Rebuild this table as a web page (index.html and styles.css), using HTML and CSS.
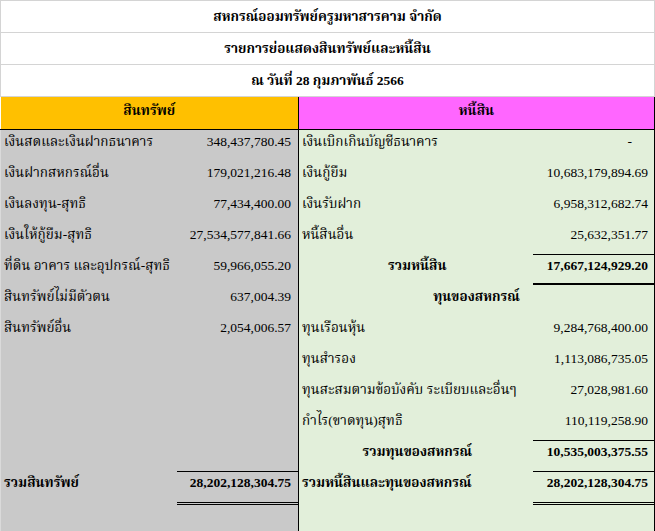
FILE: index.html
```html
<!DOCTYPE html>
<html lang="th">
<head>
<meta charset="utf-8">
<title>รายการย่อแสดงสินทรัพย์และหนี้สิน</title>
<link rel="stylesheet" href="styles.css">
</head>
<body>
<table class="sheet">
  <colgroup>
    <col class="c1"><col class="c2"><col class="c3"><col class="c4">
  </colgroup>
  <tbody>
    <tr class="title"><td colspan="4">สหกรณ์ออมทรัพย์ครูมหาสารคาม จำกัด</td></tr>
    <tr class="title"><td colspan="4">รายการย่อแสดงสินทรัพย์และหนี้สิน</td></tr>
    <tr class="title"><td colspan="4">ณ วันที่ 28 กุมภาพันธ์ 2566</td></tr>
    <tr class="head">
      <th colspan="2" class="h-asset">สินทรัพย์</th>
      <th colspan="2" class="h-liab">หนี้สิน</th>
    </tr>
    <tr class="row">
      <td class="al">เงินสดและเงินฝากธนาคาร</td><td class="an">348,437,780.45</td>
      <td class="bl">เงินเบิกเกินบัญชีธนาคาร</td><td class="bn dash">-</td>
    </tr>
    <tr class="row">
      <td class="al">เงินฝากสหกรณ์อื่น</td><td class="an">179,021,216.48</td>
      <td class="bl">เงินกู้ยืม</td><td class="bn">10,683,179,894.69</td>
    </tr>
    <tr class="row">
      <td class="al">เงินลงทุน-สุทธิ</td><td class="an">77,434,400.00</td>
      <td class="bl">เงินรับฝาก</td><td class="bn">6,958,312,682.74</td>
    </tr>
    <tr class="row">
      <td class="al">เงินให้กู้ยืม-สุทธิ</td><td class="an">27,534,577,841.66</td>
      <td class="bl">หนี้สินอื่น</td><td class="bn">25,632,351.77</td>
    </tr>
    <tr class="row">
      <td class="al">ที่ดิน อาคาร และอุปกรณ์-สุทธิ</td><td class="an">59,966,055.20</td>
      <td class="bl center bold">รวมหนี้สิน</td><td class="bn bold sub-thick">17,667,124,929.20</td>
    </tr>
    <tr class="row">
      <td class="al">สินทรัพย์ไม่มีตัวตน</td><td class="an">637,004.39</td>
      <td class="bl center bold" colspan="2">ทุนของสหกรณ์</td>
    </tr>
    <tr class="row">
      <td class="al">สินทรัพย์อื่น</td><td class="an">2,054,006.57</td>
      <td class="bl">ทุนเรือนหุ้น</td><td class="bn">9,284,768,400.00</td>
    </tr>
    <tr class="row">
      <td class="al"></td><td class="an"></td>
      <td class="bl">ทุนสำรอง</td><td class="bn">1,113,086,735.05</td>
    </tr>
    <tr class="row">
      <td class="al"></td><td class="an"></td>
      <td class="bl">ทุนสะสมตามข้อบังคับ ระเบียบและอื่นๆ</td><td class="bn">27,028,981.60</td>
    </tr>
    <tr class="row">
      <td class="al"></td><td class="an"></td>
      <td class="bl">กำไร(ขาดทุน)สุทธิ</td><td class="bn">110,119,258.90</td>
    </tr>
    <tr class="row">
      <td class="al"></td><td class="an"></td>
      <td class="bl center bold">รวมทุนของสหกรณ์</td><td class="bn bold sub">10,535,003,375.55</td>
    </tr>
    <tr class="row">
      <td class="al bold">รวมสินทรัพย์</td><td class="an bold sub">28,202,128,304.75</td>
      <td class="bl bold">รวมหนี้สินและทุนของสหกรณ์</td><td class="bn bold sub">28,202,128,304.75</td>
    </tr>
    <tr class="row last">
      <td class="al"></td><td class="an dbl-a"></td>
      <td class="bl"></td><td class="bn dbl-b"></td>
    </tr>
  </tbody>
</table>
</body>
</html>
```

FILE: styles.css
```css
html, body {
  margin: 0;
  padding: 0;
  background: #ffffff;
}

.sheet {
  border-collapse: collapse;
  table-layout: fixed;
  width: 654px;
  font-family: "Liberation Serif", "Noto Serif Thai", "Times New Roman", serif;
  font-size: 13.5px;
  line-height: 18px;
  color: #000;
}

.c1 { width: 176px; }
.c2 { width: 122px; }
.c3 { width: 234px; }
.c4 { width: 122px; }

td, th {
  padding: 0;
  white-space: nowrap;
  overflow: hidden;
}

.title td {
  height: 31px;
  text-align: center;
  vertical-align: middle;
  font-weight: bold;
  border: 1px solid #d4d4d4;
}

.head th {
  height: 28px;
  padding-bottom: 4px;
  font-weight: bold;
  border: 1px solid #000;
  text-align: center;
  vertical-align: middle;
}

.head .h-asset { border-left: 0; }

.row td {
  height: 28px;
  padding-top: 3px;
  vertical-align: top;
}

.row.last td {
  height: 27px;
  border-bottom: 2px solid #000;
}

.h-asset { background: #ffc000; }
.h-liab { background: #ff66ff; }

.al, .an { background: #c9c9c9; }
.bl, .bn { background: #e2efda; }

.al { padding-left: 3px; border-left: 1px solid #dadada; }
.an { text-align: right; padding-right: 7px; border-right: 1px solid #000; }
.bl { padding-left: 3px; }
.bn { text-align: right; padding-right: 6px; border-right: 1px solid #000; }
.bl[colspan] { border-right: 1px solid #000; padding-left: 0; }

.dash { padding-right: 22px; }
.center { text-align: center; }
.bold { font-weight: bold; }

/* accounting rules drawn inside the cell so they do not change row height */
.sub { box-shadow: inset 0 1px 0 #000; }
.sub-thick { box-shadow: inset 0 1px 0 #000, inset 0 -2px 0 #000; }
.dbl-a { box-shadow: inset 0 1px 0 #000, inset 0 2px 0 #c9c9c9, inset 0 3px 0 #000; }
.dbl-b { box-shadow: inset 0 1px 0 #000, inset 0 2px 0 #e2efda, inset 0 3px 0 #000; }
```
